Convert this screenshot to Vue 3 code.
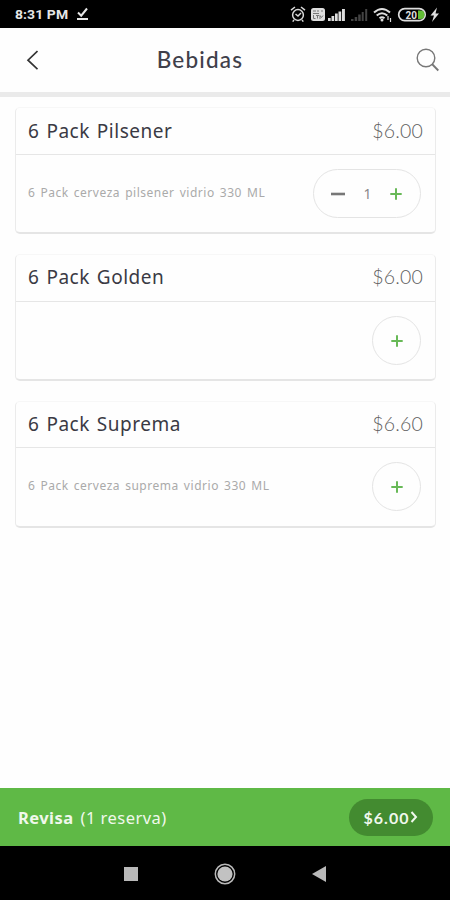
<script setup>
import { ref } from 'vue'

const items = ref([
  { name: '6 Pack Pilsener', price: '$6.00', note: '6 Pack cerveza pilsener vidrio 330 ML', qty: 1, key: 'pilsener' },
  { name: '6 Pack Golden', price: '$6.00', note: '', qty: 0, key: 'golden' },
  { name: '6 Pack Suprema', price: '$6.60', note: '6 Pack cerveza suprema vidrio 330 ML', qty: 0, key: 'suprema' }
])
</script>

<template>
  <div class="screen">
    <div class="status">
      <span class="clock">8:31 PM</span>
      <svg class="check" width="14" height="14" viewBox="0 0 14 14">
        <path d="M2 5.5l3.2 3.2L11 1.5" fill="none" stroke="#e6e6e6" stroke-width="2" />
        <path d="M1 12h11" stroke="#e6e6e6" stroke-width="2" />
      </svg>
      <svg class="indicators" width="152" height="20" viewBox="0 0 152 20">
        <g fill="none" stroke="#d8d8d8" stroke-width="1.5">
          <circle cx="8" cy="11" r="5.4" />
          <path d="M1 6.2l4-3.2M15 6.2L11 3M5.5 10l2.5 2 3-3M4 16l-1.3 1.6M12 16l1.3 1.6" />
        </g>
        <rect x="21" y="4" width="14" height="13" rx="2.5" fill="#dedede" />
        <path d="M23 7h3M27 7h2M31 7h2M23 9.5h6" stroke="#777" stroke-width="1" />
        <path d="M23.5 11v3.5h2M26 11.5h3M27.5 11.5v3M30 15v-3.5l1.5 2 1.5-2" stroke="#777" fill="none" />
        <path d="M38 17v-3h2.7v3zM41.5 17v-5h2.7v5zM45 17V9.500h2.700V17zM48.500 17V7.500h2.700V17zM52 17V5h2.900v12z" fill="#dedede" />
        <path d="M61 17v-2h2.500v2zM64.700 17v-4h2.500v4zM68.200 17v-6.500h2.500V17zM71.700 17V8h2v9zM75.200 17V5h2v12z" fill="#444" />
        <g fill="none" stroke="#dedede" stroke-width="2">
          <path d="M84 8.500q8-7 16 0M86.700 11.500q5.300-4.500 10.600 0M89.500 14.200q2.500-2 5 0" />
          <path d="M98 12v4M100.500 14v4" stroke-width="1.200" />
        </g>
        <circle cx="92" cy="16" r="1.500" fill="#dedede" />
        <rect x="108.700" y="4.700" width="26.500" height="12" rx="6" fill="none" stroke="#dedede" stroke-width="1.700" />
        <path d="M128 6.500h2.500a4 4.200 0 0 1 0 8.400H128z" fill="#62bd35" />
        <text x="115.500" y="14.500" class="charge">20</text>
        <path d="M147 3.500l-6.500 8h3.500L142 18l7-8.500h-3.500z" fill="#dedede" />
      </svg>
    </div>

    <header class="header">
      <svg width="12" height="22" viewBox="0 0 12 22">
        <path d="M11.500 2L2 11.200l9.500 9" fill="none" stroke="#333" stroke-width="1.700" />
      </svg>
      <h1>Bebidas</h1>
      <svg width="24" height="24" viewBox="0 0 24 24">
        <circle cx="10" cy="10" r="8.800" fill="none" stroke="#777" stroke-width="1.400" />
        <path d="M16 16l6.300 6.500" stroke="#777" stroke-width="1.800" />
      </svg>
    </header>

    <main class="list">
      <article v-for="item in items" :key="item.key" class="card" :class="item.key">
        <div class="card-head">
          <span class="name">{{ item.name }}</span>
          <span class="price">{{ item.price }}</span>
        </div>
        <div class="card-body">
          <span class="note">{{ item.note }}</span>
          <div class="stepper" :class="{ wide: item.qty }">
            <svg v-if="item.qty" width="14" height="12" viewBox="0 0 14 12">
              <path d="M0 6h14" stroke="#777" stroke-width="2.600" />
            </svg>
            <span v-if="item.qty" class="qty">{{ item.qty }}</span>
            <svg width="12" height="12" viewBox="0 0 12 12">
              <path d="M0.300 6h11.400M6 0.300v11.400" stroke="#68b957" stroke-width="2" />
            </svg>
          </div>
        </div>
      </article>
    </main>

    <footer class="review">
      <div class="review-text"><b>Revisa</b><span>(1 reserva)</span></div>
      <div class="total">
        <span>$6.00</span>
        <svg width="8" height="12" viewBox="0 0 8 12">
          <path d="M1.500 1l4.500 5-4.500 5" fill="none" stroke="#f0f8ec" stroke-width="2" />
        </svg>
      </div>
    </footer>

    <nav class="system">
      <svg width="14" height="14"><rect width="14" height="14" fill="#b9b9b9" /></svg>
      <svg width="22" height="22" viewBox="0 0 22 22">
        <circle cx="11" cy="11" r="9.700" fill="none" stroke="#b9b9b9" stroke-width="1.500" />
        <circle cx="11" cy="11" r="7.600" fill="#c2c2c2" />
      </svg>
      <svg width="14" height="16" viewBox="0 0 14 16"><path d="M14 0v16L0 8z" fill="#b9b9b9" /></svg>
    </nav>
  </div>
</template>

<style>
body {
  background: #fefefe;
}
</style>

<style scoped>
.screen {
  display: flex;
  flex-direction: column;
  width: 450px;
  height: 900px;
  overflow: hidden;
  background: #fefefe;
  font-family: "Noto Sans", sans-serif;
}
.status {
  display: flex;
  align-items: center;
  flex: 0 0 28px;
  padding: 0 8px 0 15px;
  background: #000;
}
.clock {
  width: 55px;
  padding-top: 2px;
  color: #e6e6e6;
  font: bold 13px/26px Roboto, sans-serif;
  letter-spacing: 0.1px;
  transform: scaleX(1.07);
  transform-origin: left;
  white-space: nowrap;
}
.check {
  margin-left: 6px;
}
.indicators {
  margin-left: auto;
}
.charge {
  font: bold 10px Roboto, sans-serif;
  fill: #dedede;
}
.header {
  display: flex;
  align-items: center;
  flex: 0 0 69px;
  box-sizing: border-box;
  padding: 0 10px 0 26px;
  border-bottom: 5px solid #eaeaea;
}
.header h1 {
  flex: 1;
  margin: 0;
  padding-right: 56px;
  color: #40404a;
  text-align: center;
  text-indent: 2px;
  font: 500 22.5px/28px Lato, sans-serif;
  letter-spacing: 1.2px;
}
.list {
  display: flex;
  flex-direction: column;
  gap: 20px;
  flex: 1;
  padding: 10px 14px 0 15px;
}
.card {
  box-sizing: border-box;
  height: 127px;
  border: 1px solid #ebebeb;
  border-top-color: #f7f7f7;
  border-bottom: 2px solid #e5e5e5;
  border-radius: 5px;
  background: #fefefe;
}
.card-head {
  display: flex;
  align-items: center;
  justify-content: space-between;
  box-sizing: border-box;
  height: 47px;
  padding: 0 12px 1px 12px;
  border-bottom: 1px solid #e6e6e6;
}
.suprema .card-head {
  height: 46px;
}
.name {
  color: #3a3a44;
  font-size: 19px;
  letter-spacing: 0.5px;
  word-spacing: 1.6px;
}
.golden .name,
.golden .price {
  padding-bottom: 2px;
}
.price {
  padding-bottom: 1px;
  color: #606060;
  font: 300 19.5px Lato, sans-serif;
  letter-spacing: 0.2px;
}
.card-body {
  display: flex;
  align-items: center;
  justify-content: space-between;
  height: 77px;
  padding: 0 14px 0 12px;
}
.note {
  padding-bottom: 3px;
  color: #aaa;
  font-size: 12px;
  letter-spacing: 0.53px;
  word-spacing: 1.4px;
}
.stepper {
  display: flex;
  align-items: center;
  justify-content: center;
  box-sizing: border-box;
  width: 49px;
  height: 49px;
  border: 1.5px solid #e4e4e4;
  border-radius: 25px;
}
.stepper.wide {
  justify-content: space-between;
  width: 108px;
  padding: 0 18px 0 17px;
}
.qty {
  color: #888;
  font-size: 14px;
}
.review {
  display: flex;
  align-items: center;
  justify-content: space-between;
  flex: 0 0 58px;
  padding: 0 17px 0 18px;
  background: #5fb946;
  color: #f0f8ec;
}
.review-text {
  display: flex;
  gap: 7px;
  font-size: 16.5px;
  letter-spacing: 0.45px;
}
.total {
  display: flex;
  align-items: center;
  justify-content: center;
  gap: 1px;
  width: 84px;
  height: 37px;
  border-radius: 19px;
  background: #438b30;
  font: bold 16px Lato, sans-serif;
  letter-spacing: 1px;
}
.system {
  display: flex;
  align-items: center;
  justify-content: center;
  gap: 76px;
  flex: 0 0 54px;
  box-sizing: border-box;
  padding-top: 1px;
  background: #000;
}
</style>
